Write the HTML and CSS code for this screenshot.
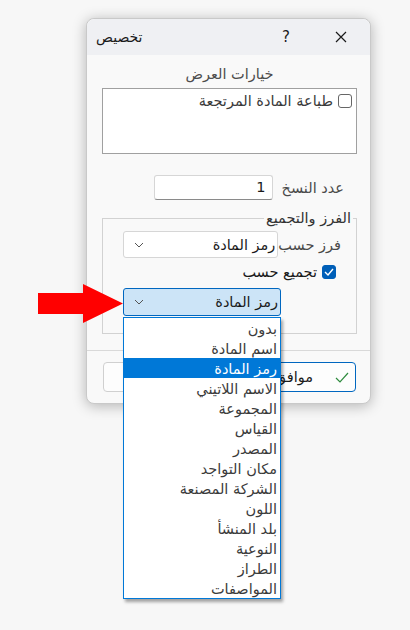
FILE: index.html
```html
<!DOCTYPE html>
<html lang="ar" dir="rtl">
<head>
  <meta charset="UTF-8">
  <title>تخصيص</title>
  <link rel="stylesheet" href="styles.css">
</head>
<body>
  <div class="dialog">
    <div class="titlebar">
      <span class="title">تخصيص</span>
      <span class="help">?</span>
      <span class="close">
        <svg width="12" height="12" viewBox="0 0 12 12"><path d="M1 1 L11 11 M11 1 L1 11" stroke="#1a1a1a" stroke-width="1.2" fill="none"/></svg>
      </span>
    </div>

    <div class="content">
      <div class="section-title">خيارات العرض</div>
      <div class="options-box">
        <label class="check-row">
          <span class="checkbox"></span>
          <span>طباعة المادة المرتجعة</span>
        </label>
      </div>

      <div class="copies-row">
        <span class="label">عدد النسخ</span>
        <div class="textbox">1</div>
      </div>

      <div class="group">
        <span class="legend">الفرز والتجميع</span>
        <div class="group-body">
          <div class="sort-row">
            <span class="label">فرز حسب</span>
            <div class="combo">
              <span>رمز المادة</span>
              <svg class="chev" width="10" height="6" viewBox="0 0 10 6"><path d="M1 1 L5 5 L9 1" stroke="#555" stroke-width="1" fill="none"/></svg>
            </div>
          </div>
          <div class="group-row">
            <span class="checkbox checked">
              <svg width="10" height="8" viewBox="0 0 10 8"><path d="M1 4 L4 7 L9 1" stroke="#fff" stroke-width="1.4" fill="none"/></svg>
            </span>
            <span class="label dark">تجميع حسب</span>
          </div>
          <div class="combo open">
            <span>رمز المادة</span>
            <svg class="chev" width="10" height="6" viewBox="0 0 10 6"><path d="M1 1 L5 5 L9 1" stroke="#555" stroke-width="1" fill="none"/></svg>

            <svg class="pointer" width="86" height="40" viewBox="0 0 86 40"><polygon points="0,9 45,9 45,0 85,19.5 45,39 45,30 0,30" fill="#ff0000"/></svg>

            <ul class="dropdown">
              <li>بدون</li>
              <li>اسم المادة</li>
              <li class="selected">رمز المادة</li>
              <li>الاسم اللاتيني</li>
              <li>المجموعة</li>
              <li>القياس</li>
              <li>المصدر</li>
              <li>مكان التواجد</li>
              <li>الشركة المصنعة</li>
              <li>اللون</li>
              <li>بلد المنشأ</li>
              <li>النوعية</li>
              <li>الطراز</li>
              <li>المواصفات</li>
            </ul>
          </div>
        </div>
      </div>
    </div>

    <div class="footer">
      <div class="button default">
        <svg width="14" height="11" viewBox="0 0 14 11"><path d="M1 6 L5 10 L13 1" stroke="#2e8b3e" stroke-width="1.2" fill="none"/></svg>
        <span>موافق</span>
      </div>
      <div class="button">
        <span>إلغاء</span>
      </div>
    </div>
  </div>
</body>
</html>
```

FILE: styles.css
```css
body {
  margin: 0;
  min-height: 630px;
  box-sizing: border-box;
  background: #f7f7f7;
  font-family: "DejaVu Sans", sans-serif;
  font-size: 14.5px;
  color: #1a1a1a;
  padding: 18px 0 0 86px;
  direction: ltr;
}

.dialog {
  direction: rtl;
  width: 283px;
  height: 384px;
  background: #f9f9f9;
  border: 1px solid #c9c9c9;
  border-radius: 8px;
  box-shadow: 0 2px 14px rgba(0, 0, 0, 0.28);
  display: flex;
  flex-direction: column;
}

.titlebar {
  direction: ltr;
  height: 36px;
  background: #eff0f3;
  border-radius: 8px 8px 0 0;
  display: flex;
  align-items: center;
  padding: 0 0 0 9px;
}

.title {
  flex: 1;
  font-size: 14px;
  color: #1a1a1a;
}

.help {
  width: 14px;
  font-size: 15px;
  margin-right: 39px;
}

.close {
  width: 12px;
  height: 12px;
  display: flex;
  margin-right: 23px;
}

.content {
  padding: 0 13px 0 15px;
}

.section-title {
  text-align: center;
  color: #4d4d4d;
  margin-top: 9px;
  height: 20px;
  line-height: 20px;
}

.options-box {
  margin-top: 4px;
  height: 60px;
  background: #fff;
  border: 1px solid #a0a0a0;
  padding: 4px 4px 0 0;
}

.check-row {
  display: flex;
  align-items: center;
  gap: 5px;
  color: #3a3a3a;
}

.checkbox {
  width: 12px;
  height: 12px;
  border: 1px solid #666;
  border-radius: 3px;
  background: #fff;
  display: inline-flex;
  align-items: center;
  justify-content: center;
  flex: none;
}

.checkbox.checked {
  background: #005fb8;
  border-color: #005fb8;
}

.copies-row {
  display: flex;
  align-items: center;
  gap: 9px;
  margin: 21px 13px 0 0;
}

.label {
  color: #4a4a4a;
  white-space: nowrap;
}

.label.dark {
  color: #1a1a1a;
}

.textbox {
  width: 105px;
  height: 23px;
  line-height: 23px;
  background: #fff;
  border: 1px solid #d6d6d6;
  border-bottom-color: #8a8a8a;
  border-radius: 3px;
  padding: 0 6px;
  text-align: right;
}

.group {
  margin-top: 18px;
  border: 1px solid #d2d2d2;
  display: flex;
  flex-direction: column;
}

.legend {
  align-self: flex-start;
  margin: -9px 3px 0 0;
  padding: 0 2px;
  line-height: 16px;
  background: #f9f9f9;
  color: #333;
}

.group-body {
  padding: 0 15px 17px 20px;
}

.sort-row {
  display: flex;
  align-items: center;
  justify-content: space-between;
  margin-top: 5px;
}

.combo {
  position: relative;
  box-sizing: border-box;
  width: 158px;
  height: 27px;
  background: #fff;
  border: 1px solid #d6d6d6;
  border-radius: 3px;
  display: flex;
  align-items: center;
  justify-content: space-between;
  padding: 0 2px 0 10px;
}

.combo span {
  color: #1a1a1a;
}

.group-row {
  display: flex;
  align-items: center;
  gap: 5px;
  height: 14px;
  margin: 7px 5px 0 0;
}

.combo.open {
  background: #cce4f7;
  border-color: #0067c0;
  height: 28px;
  margin: 9px auto 0 0;
}

.pointer {
  position: absolute;
  left: -86px;
  top: -5px;
}

.dropdown {
  position: absolute;
  top: 28px;
  right: -1px;
  box-sizing: border-box;
  width: 158px;
  margin: 0;
  padding: 0;
  list-style: none;
  background: #fff;
  border: 1px solid #0078d7;
  box-shadow: 2px 3px 3px rgba(0, 0, 0, 0.35);
  z-index: 5;
}

.dropdown li {
  height: 17px;
  line-height: 17px;
  padding: 3px 3px 0 0;
  color: #3b3b3b;
}

.dropdown li.selected {
  background: #0078d7;
  color: #fff;
}

.footer {
  margin-top: auto;
  border-top: 1px solid #d9d9d9;
  height: 52px;
  display: flex;
  align-items: center;
  gap: 7px;
  padding: 0 14px 0 16px;
}

.button {
  flex: 1;
  height: 28px;
  background: #fdfdfd;
  border: 1px solid #d0d0d0;
  border-radius: 4px;
  display: flex;
  align-items: center;
  justify-content: center;
  gap: 8px;
}

.button.default {
  border-color: #0067c0;
  justify-content: flex-start;
  gap: 22px;
  padding-right: 6px;
}
```
